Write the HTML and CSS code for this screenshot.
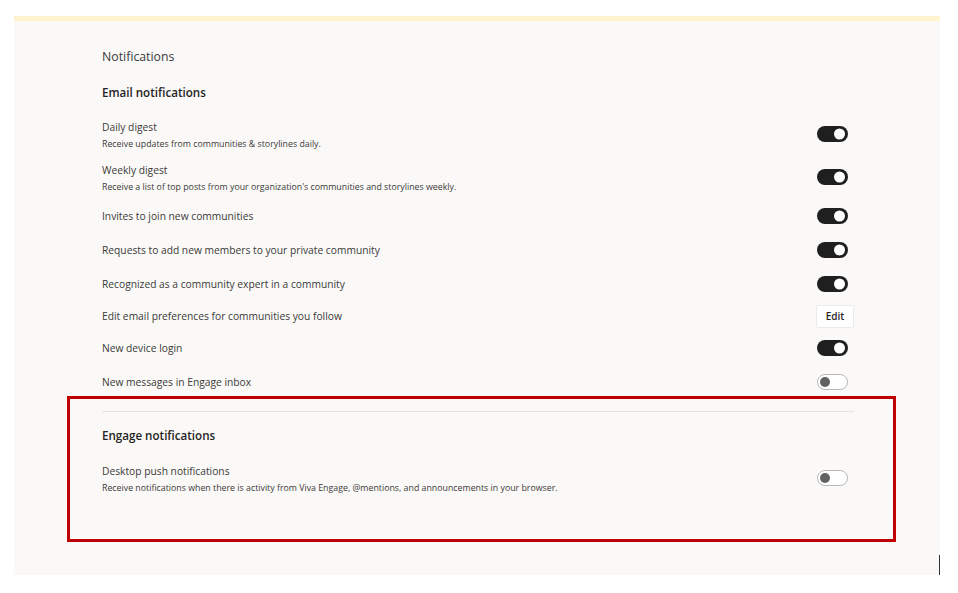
FILE: index.html
```html
<!DOCTYPE html>
<html lang="en">
<head>
<meta charset="utf-8">
<title>Notifications</title>
<link rel="stylesheet" href="styles.css">
</head>
<body>
<div class="panel">
  <div class="content">
    <div class="page-title">Notifications</div>

    <div class="section-title">Email notifications</div>

    <div class="row two r-daily">
      <div class="text">
        <div class="label">Daily digest</div>
        <div class="desc">Receive updates from communities &amp; storylines daily.</div>
      </div>
      <span class="toggle on"></span>
    </div>
    <div class="row two r-weekly">
      <div class="text">
        <div class="label">Weekly digest</div>
        <div class="desc">Receive a list of top posts from your organization's communities and storylines weekly.</div>
      </div>
      <span class="toggle on"></span>
    </div>
    <div class="row">
      <div class="label">Invites to join new communities</div>
      <span class="toggle on"></span>
    </div>
    <div class="row">
      <div class="label">Requests to add new members to your private community</div>
      <span class="toggle on"></span>
    </div>
    <div class="row">
      <div class="label">Recognized as a community expert in a community</div>
      <span class="toggle on"></span>
    </div>
    <div class="row r-edit">
      <div class="label">Edit email preferences for communities you follow</div>
      <button class="edit-btn" type="button">Edit</button>
    </div>
    <div class="row">
      <div class="label">New device login</div>
      <span class="toggle on"></span>
    </div>
    <div class="row">
      <div class="label">New messages in Engage inbox</div>
      <span class="toggle off"></span>
    </div>

    <div class="divider"></div>

    <div class="section-title">Engage notifications</div>

    <div class="row two r-push">
      <div class="text">
        <div class="label">Desktop push notifications</div>
        <div class="desc">Receive notifications when there is activity from Viva Engage, @mentions, and announcements in your browser.</div>
      </div>
      <span class="toggle off"></span>
    </div>
  </div>
  <div class="highlight"></div>
  <div class="caret"></div>
</div>
</body>
</html>
```

FILE: styles.css
```css
* { box-sizing: border-box; }

html, body {
  margin: 0;
  padding: 0;
  background: #ffffff;
}

body {
  font-family: "Open Sans", "Liberation Sans", sans-serif;
  color: #3b3a39;
}

.panel {
  position: relative;
  margin: 16px 0 0 14px;
  width: 926px;
  height: 559px;
  background: #faf9f8;
  border-top: 5px solid #fdf3cf;
}

.content {
  width: 752px;
  margin-left: 88px;
  padding-top: 26px;
}

.page-title {
  height: 20px;
  line-height: 20px;
  font-size: 12.3px;
  font-weight: 500;
  color: #3b3a39;
}

.section-title {
  margin-top: 16px;
  height: 20px;
  line-height: 20px;
  font-size: 11.6px;
  font-weight: 600;
  color: #252423;
}

.row {
  display: flex;
  align-items: center;
  justify-content: space-between;
  height: 34px;
}

.row.two {
  align-items: flex-start;
  height: 43px;
}

.row.two .toggle { margin-top: 7px; }

.section-title + .row { margin-top: 16px; }

.r-weekly { height: 37px !important; }
.r-edit { height: 30px; }

.label {
  font-size: 10.25px;
  line-height: 16px;
  color: #3b3a39;
}

.desc {
  margin-top: 1px;
  font-size: 8.8px;
  line-height: 16px;
  color: #3b3a39;
}

.toggle {
  position: relative;
  flex: none;
  width: 31px;
  height: 16px;
  margin-right: 6px;
  border-radius: 8px;
}

.toggle::after {
  content: "";
  position: absolute;
  top: 50%;
  width: 11px;
  height: 11px;
  border-radius: 50%;
  transform: translateY(-50%);
}

.toggle.on {
  background: #1f1f1f;
}

.toggle.on::after {
  right: 3px;
  background: #ffffff;
}

.toggle.off {
  background: #ffffff;
  border: 1.5px solid #b9b8b7;
}

.toggle.off::after {
  left: 2px;
  width: 10px;
  height: 10px;
  background: #616161;
}

.edit-btn {
  flex: none;
  width: 38px;
  height: 23px;
  padding: 0;
  border: 1px solid #ecebea;
  border-radius: 2px;
  background: #ffffff;
  font-family: inherit;
  font-size: 10px;
  font-weight: 600;
  color: #252423;
}

.divider {
  margin-top: 12px;
  height: 1px;
  background: #e6e4e2;
}

.divider + .section-title { margin-top: 14px; }

.r-push { margin-top: 17px !important; }

.highlight {
  position: absolute;
  left: 53px;
  top: 375px;
  width: 829px;
  height: 146px;
  border: 3px solid #c00000;
}

.caret {
  position: absolute;
  left: 925px;
  top: 534px;
  width: 1px;
  height: 20px;
  background: #333;
}
```
